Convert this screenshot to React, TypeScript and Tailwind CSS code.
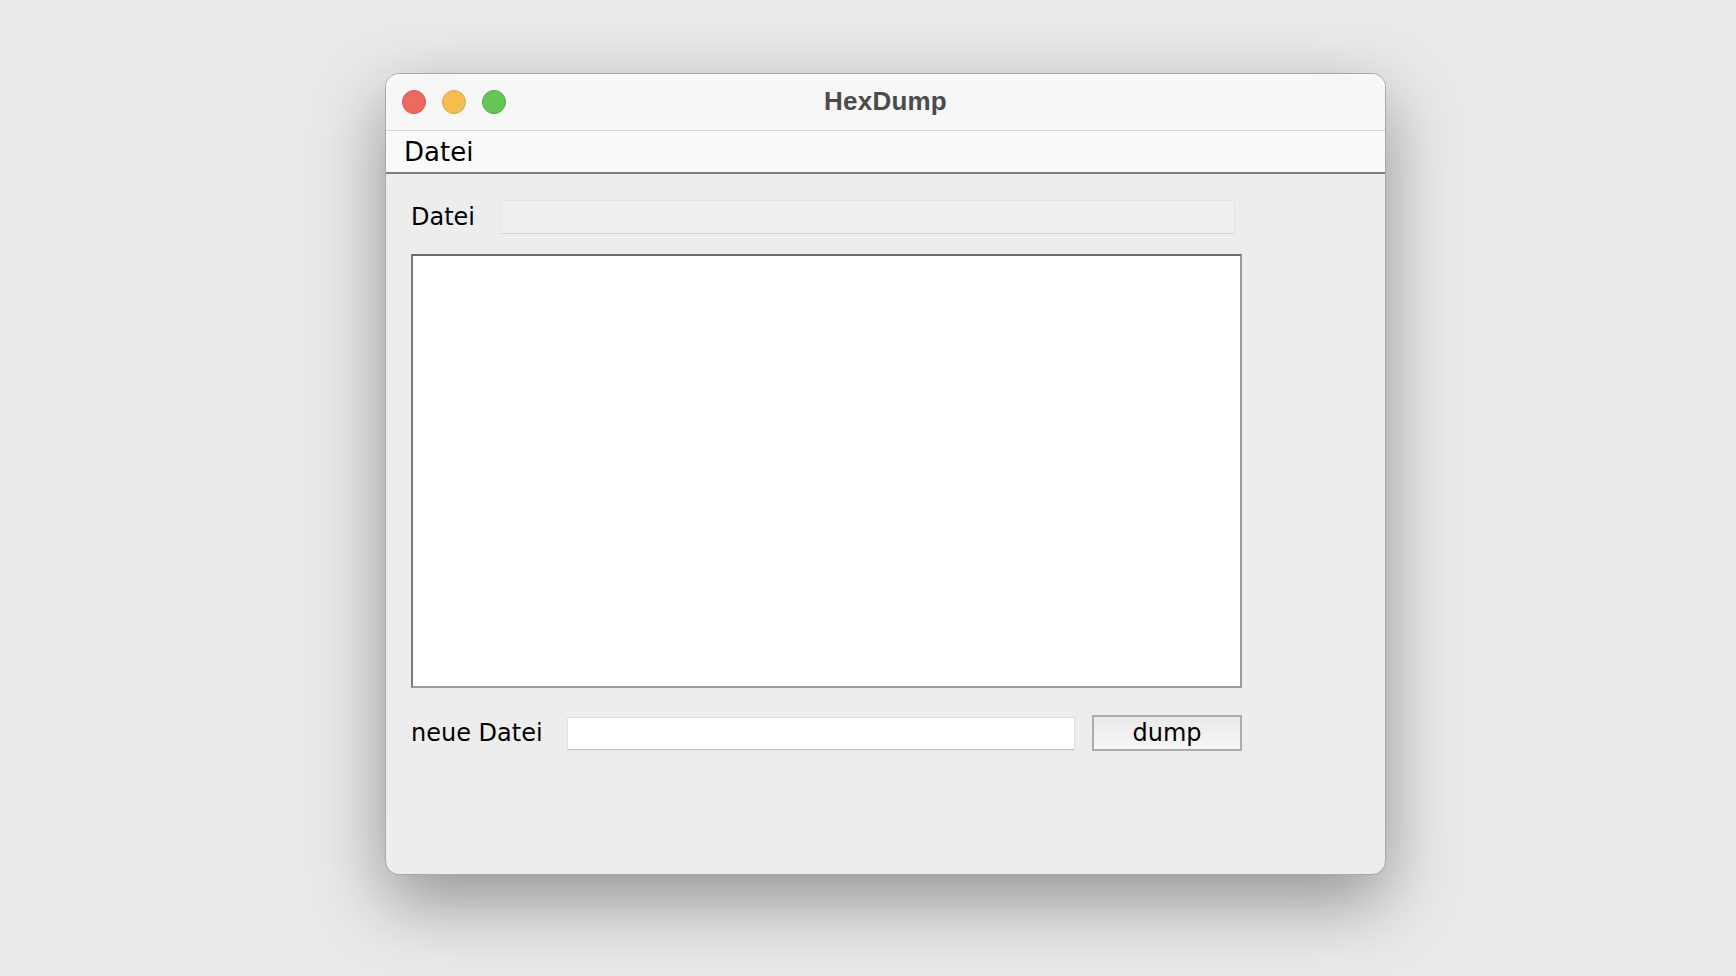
const UI_FONT = 'font-["DejaVu_Sans",sans-serif]';

function TrafficLights() {
  return (
    <div className="flex gap-4">
      <span className="w-6 h-6 rounded-full bg-[#ee6a5f] border border-[#d85a50]" />
      <span className="w-6 h-6 rounded-full bg-[#f5be4f] border border-[#dea63d]" />
      <span className="w-6 h-6 rounded-full bg-[#62c554] border border-[#52ad45]" />
    </div>
  );
}

export default function App() {
  return (
    <div className="w-[1736px] h-[976px] bg-[#ebeae8] pl-[385px] pt-[73px] overflow-hidden">
      <div className="w-[1001px] h-[802px] flex flex-col rounded-[14px] border border-[#a8a8a8] bg-[#ededed] overflow-hidden shadow-[0_26px_72px_rgba(0,0,0,0.38)]">
        {/* title bar */}
        <div className="relative h-[57px] shrink-0 bg-[#f7f7f7] border-b border-[#d6d6d6] flex items-center pl-4">
          <TrafficLights />
          <div className="absolute inset-0 flex items-center justify-center pointer-events-none pb-[2px]">
            <span className='font-["Liberation_Sans",Arial,sans-serif] font-bold text-[26px] text-[#4b4b4b] tracking-[0.2px]'>
              HexDump
            </span>
          </div>
        </div>

        {/* menu bar */}
        <div className="h-[43px] shrink-0 bg-[#fafafa] border-b-2 border-[#7f7f7f] flex items-center pl-[18px]">
          <span className={`${UI_FONT} text-[26px] text-black leading-none`}>Datei</span>
        </div>

        {/* content */}
        <div className={`${UI_FONT} flex-1 pl-[25px] pt-[26px]`}>
          <div className="w-[831px] flex flex-col">
            <div className="h-[34px] flex items-center gap-[25px]">
              <span className="text-[24px] text-black leading-none">Datei</span>
              <div className="w-[735px] h-[34px] bg-[#efefef] border border-[#e6e6e6] border-b-[#d6d6d6]" />
            </div>

            <div className="mt-[20px] h-[434px] bg-white border-2 border-t-[#6b6b6b] border-l-[#7a7a7a] border-r-[#9a9a9a] border-b-[#9a9a9a]" />

            <div className="mt-[27px] h-[36px] flex items-center">
              <span className="text-[24px] text-black leading-none w-[156px] shrink-0">neue Datei</span>
              <div className="w-[508px] h-[33px] bg-white border border-[#e2e2e2] border-b-[#bcbcbc]" />
              <button className="ml-[17px] w-[150px] h-[36px] border-2 border-[#acacac] bg-gradient-to-b from-[#e9e9e9] to-[#f7f7f7] text-[24px] text-black leading-none">
                dump
              </button>
            </div>
          </div>
        </div>
      </div>
    </div>
  );
}
